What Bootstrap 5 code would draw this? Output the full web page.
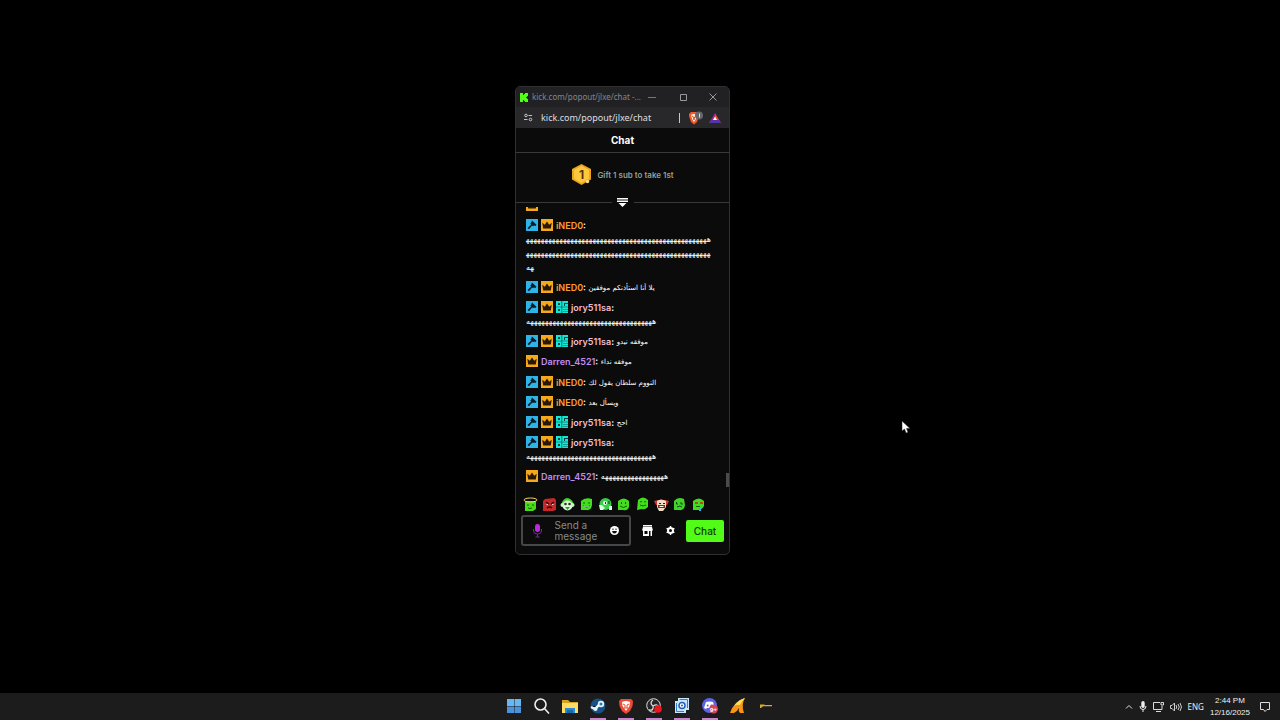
<!DOCTYPE html>
<html lang="en">
<head>
<meta charset="utf-8">
<meta name="viewport" content="width=device-width, initial-scale=1">
<title>Desktop</title>
<link href="https://cdn.jsdelivr.net/npm/bootstrap@5.3.0/dist/css/bootstrap.min.css" rel="stylesheet">
<style>
body{background:#000;font-family:Inter,"DejaVu Sans",sans-serif;font-size:9px;line-height:14px}
button{background:none;border:0;padding:0;color:inherit;line-height:0}
svg{display:block}
.desktop{height:100vh}
.popout{position:absolute;left:515px;top:86px;width:215px;height:469px;background:#0b0b0b;border:1px solid #303033;border-radius:5px;overflow:hidden}
.titlebar{height:20px;background:#212124;color:#85858a;font-family:"Noto Sans",sans-serif;font-size:8px}
.titlebar .tab-name{width:112px}
.addressbar{height:21px;background:#28282b;font-family:"Noto Sans",sans-serif}
.addressbar input{width:130px;background:none;border:0;padding:0;color:#dedee0;font-size:9px;line-height:14px}
.addressbar .divider{width:1px;height:10px;background:#c8c8ca}
.chat-title{height:25px;border-bottom:1px solid #37393b;color:#fff;font-size:10px}
.gift{height:50px;border-bottom:1px solid #37393b;color:#93a09a;font-size:8px}
.gift-offer{padding-bottom:6px;gap:5px}
.gift-toggle{position:absolute;left:50%;bottom:-7px;width:22px;height:14px;margin-left:-11px;background:#0b0b0b;color:#fff}
.messages{padding:4px 15px 6px 10px;height:289px}
.msg{padding:3px 0 2px;color:#fff;overflow-wrap:anywhere}
.msg.clipped{height:4px;padding:0;margin-bottom:4px}
.msg svg{display:inline-block;width:12px;height:12px;margin-right:3px;vertical-align:-2px}
.msg b{font-weight:600}
.msg [lang=ar]{font-family:"DejaVu Sans",sans-serif;font-size:7px;line-height:12px;vertical-align:1px}
.msg .laugh{font-size:8px}
.orange{color:#ff9d33}.pink{color:#f2bdd0}.violet{color:#c18cf5}
.thumb{position:absolute;right:0;top:386px;width:3px;height:14px;background:#4a4b4c}
.emotes{padding:5px 23px 3px 7px}
.composer{padding:0 5px}
.message-box{width:110px;height:31px;border:2px solid #45484a;border-radius:3px;padding:0 10px 0 9px}
.message-box textarea{width:44px;height:22px;background:none;border:0;padding:0;resize:none;overflow:hidden;color:#fff;font-size:10px;line-height:11px}
.message-box textarea::placeholder{color:#858a8c;opacity:1}
.send{width:38px;height:22px;background:#53fc18;border-radius:2px;color:#0d3a05;font-size:10px;line-height:14px;font-weight:500}
.taskbar{height:27px;background:#1c1c1c;color:#eee;font-family:"Noto Sans",sans-serif;font-size:8px;line-height:12px}
.apps{position:absolute;left:506px;bottom:0;height:27px;gap:12px}
.apps button{width:16px;height:27px;border-bottom:2px solid transparent}
.apps button.open{border-color:#c983cf}
.tray{padding-right:10px;gap:6px}
.tray time{font-family:"Liberation Sans",sans-serif}
.pointer{position:absolute;left:901px;top:420px}
</style>
</head>
<body>
<svg width="0" height="0" class="position-absolute" aria-hidden="true">
<symbol id="mod" viewBox="0 0 12 12"><path fill="#2fb4e8" d="M0 0h12v12H0z"/><path fill="#0a1d28" d="m6 1.500 4.500 4.300-1 1.200L8 6.500 7 7.300l-.8-.8L3 10.300 1.500 9l3.700-3.400-1-.9L5 4z"/></symbol>
<symbol id="vip" viewBox="0 0 12 12"><path fill="#f6a91b" d="M0 0h12v12H0z"/><path fill="#2a1803" d="M1.300 3.800 3.800 5.700 6 2.600l2.200 3.100 2.500-1.900-.9 5.700H2.200z"/></symbol>
<symbol id="og" viewBox="0 0 12 12"><path fill="#12e6d6" d="M0 0h12v12H0z"/><path fill="#06453f" d="M2 2h2v2H2zM8 2h4v1H8zM8 3h1v2H8zM2 8h2v2H2zM5.500 0h.7v12h-.7zM0 5.700h12v.6H0z"/><path fill="#0b9f96" d="M7 8h5v1H7zM7 10h5v1H7z"/></symbol>
</svg>
<div class="desktop d-flex flex-column justify-content-end position-relative overflow-hidden">
<main class="popout d-flex flex-column">
 <header class="titlebar d-flex align-items-center ps-1 flex-shrink-0">
  <svg width="8" height="9" viewBox="0 0 8 9"><path fill="#53fc18" d="M0 0h3v2h1V1h1V0h3v3H7v1H6v1h1v1h1v3H5V8H4V7H3v2H0z"/></svg>
  <span class="tab-name ms-1 text-nowrap">kick.com/popout/jlxe/chat -...</span>
  <div class="d-flex flex-fill align-items-center justify-content-between pe-2 me-1 ms-1">
   <button aria-label="Minimize"><svg width="8" height="8" viewBox="0 0 8 8" stroke="#77777b"><path d="M0 4.500h8"/></svg></button>
   <button aria-label="Maximize"><svg width="8" height="8" viewBox="0 0 8 8" stroke="#99999c" fill="none"><path d="M1.500 1.500h6v6h-6z"/></svg></button>
   <button aria-label="Close"><svg width="8" height="8" viewBox="0 0 8 8" stroke="#99999c"><path d="m.5.500 7 7m0-7-7 7"/></svg></button>
  </div>
 </header>
 <div class="addressbar d-flex align-items-center flex-shrink-0 px-2">
  <button class="me-2" aria-label="Site settings"><svg width="9" height="9" viewBox="0 0 9 9" fill="none" stroke="#c5c5c9"><circle cx="2" cy="2.500" r="1.300"/><path d="M4.500 2.500H8M0 6.500h3.500"/><circle cx="6.500" cy="6.500" r="1.300"/></svg></button>
  <input type="text" value="kick.com/popout/jlxe/chat" aria-label="Address">
  <span class="divider ms-2 me-2"></span>
  <button class="me-1" aria-label="Brave Shields"><svg width="17" height="14" viewBox="0 0 17 14"><path fill="#f15a2b" d="m1 3 2-2h5l2 1 1 3-2 6-3 2.500L3 11 1 5z"/><path fill="#ffe9df" d="m3 4 2-1h2l2 1-1 4-2 3-2-3z"/><path stroke="#d8531f" fill="none" d="m4 5 1.500 1L6 9l.5-3L8 5"/><circle cx="11" cy="4.500" r="4" fill="#66676c"/><path stroke="#ddd" d="M11.500 2.500v4"/></svg></button>
  <button aria-label="Rewards"><svg width="12" height="10" viewBox="0 0 12 10"><path fill="#a0268f" d="M6 0 0 10h6z"/><path fill="#e8442c" d="m6 0 6 10H6z"/><path fill="#5434aa" d="M0 10h12l-2-3H2z"/><path fill="#fff" d="m6 3.500 2 3.500H4z"/></svg></button>
 </div>
 <h1 class="chat-title d-flex align-items-center justify-content-center fw-bold m-0 flex-shrink-0">Chat</h1>
 <section class="gift d-flex align-items-center justify-content-center position-relative flex-shrink-0">
  <div class="gift-offer d-flex align-items-center">
   <svg width="21" height="21" viewBox="0 0 21 21"><path fill="#efa51b" d="m10.500 0 9.500 5v10.500L10.500 21 1 15.500V5z"/><path fill="#ffc83f" d="m10.500 2 7.500 4v8.500l-7.500 4.500L3 14.500V6z"/><circle cx="16.500" cy="17.500" r="1.700" fill="#ffe27a"/><text x="10.500" y="15" text-anchor="middle" font-size="12" font-weight="700" fill="#5c3108">1</text></svg>
   <span class="fw-semibold">Gift 1 sub to take 1st</span>
  </div>
  <button class="gift-toggle d-flex justify-content-center align-items-center" aria-label="Expand leaderboard"><svg width="11" height="10" viewBox="0 0 11 10" fill="currentColor"><path d="M0 1h11v1.500H0zM0 3.500h11V5H0zM1.500 6h8l-4 4z"/></svg></button>
 </section>
 <section class="messages d-flex flex-column justify-content-between overflow-hidden flex-shrink-0" aria-label="Messages">
  <div class="msg clipped d-flex align-items-end overflow-hidden flex-shrink-0"><svg class="flex-shrink-0"><use href="#vip"/></svg></div>
  <div class="msg"><svg><use href="#mod"/></svg><svg><use href="#vip"/></svg><b class="orange">iNED0</b><b>:</b> <span class="laugh" lang="ar">هههههههههههههههههههههههههههههههههههههههههههههههههههههههههههههههههههههههههههههههههههههههههههههههههههههه</span></div>
  <div class="msg"><svg><use href="#mod"/></svg><svg><use href="#vip"/></svg><b class="orange">iNED0</b><b>:</b> <span lang="ar">يلا أنا استأذنكم موفقين</span></div>
  <div class="msg"><svg><use href="#mod"/></svg><svg><use href="#vip"/></svg><svg><use href="#og"/></svg><b class="pink">jory511sa</b><b>:</b> <span class="laugh" lang="ar">ههههههههههههههههههههههههههههههههههه</span></div>
  <div class="msg"><svg><use href="#mod"/></svg><svg><use href="#vip"/></svg><svg><use href="#og"/></svg><b class="pink">jory511sa</b><b>:</b> <span lang="ar">موفقه نيدو</span></div>
  <div class="msg"><svg><use href="#vip"/></svg><b class="violet">Darren_4521</b><b>:</b> <span lang="ar">موفقه نداء</span></div>
  <div class="msg"><svg><use href="#mod"/></svg><svg><use href="#vip"/></svg><b class="orange">iNED0</b><b>:</b> <span lang="ar">النووم سلطان يقول لك</span></div>
  <div class="msg"><svg><use href="#mod"/></svg><svg><use href="#vip"/></svg><b class="orange">iNED0</b><b>:</b> <span lang="ar">ويسأل بعد</span></div>
  <div class="msg"><svg><use href="#mod"/></svg><svg><use href="#vip"/></svg><svg><use href="#og"/></svg><b class="pink">jory511sa</b><b>:</b> <span lang="ar">احح</span></div>
  <div class="msg"><svg><use href="#mod"/></svg><svg><use href="#vip"/></svg><svg><use href="#og"/></svg><b class="pink">jory511sa</b><b>:</b> <span class="laugh" lang="ar">ههههههههههههههههههههههههههههههههههه</span></div>
  <div class="msg"><svg><use href="#vip"/></svg><b class="violet">Darren_4521</b><b>:</b> <span class="laugh" lang="ar">هههههههههههههههههه</span></div>
 </section>
 <span class="thumb"></span>
 <div class="emotes d-flex flex-shrink-0 justify-content-between">
  <button aria-label="Angel"><svg width="15" height="15" viewBox="0 0 15 15"><path fill="#44dc18" d="M2 4h11v8l-3 2H2z"/><ellipse cx="7.500" cy="3" rx="6.500" ry="2" fill="none" stroke="#f4d46a"/><path stroke="#126408" fill="none" d="M4 8h2m3 0h2m-6 3q2 1 4 0"/></svg></button>
  <button aria-label="Angry"><svg width="15" height="15" viewBox="0 0 15 15"><path fill="#c42a2c" d="m3 2 9-1 2 2v10l-3 1H1V4z"/><path stroke="#3b0508" stroke-width="1.500" fill="none" d="m4 5 3 2m5-2L9 7m-4 4q2.500-2 5 0"/><path stroke="#ffd7d7" d="M4.500 7.500h1.500m4 0h1.500"/></svg></button>
  <button aria-label="Clown"><svg width="15" height="15" viewBox="0 0 15 15"><path fill="#3fd32c" d="M2 5q5-8 11 0v4H2z"/><circle cx="7.500" cy="8.500" r="5" fill="#e6f5df"/><circle cx="2.500" cy="8" r="2" fill="#c9f5c6"/><circle cx="12.500" cy="8" r="2" fill="#c9f5c6"/><circle cx="5.500" cy="7" r="1.300" fill="#173b1b"/><circle cx="9.500" cy="7" r="1.300" fill="#173b1b"/><path fill="#2aa52f" d="M5 10h5l-2.500 3z"/></svg></button>
  <button aria-label="Laugh"><svg width="15" height="15" viewBox="0 0 15 15"><path fill="#42dd1c" d="M2 4q4-4 11-2v6q-1 6-6 5H2z"/><path stroke="#0b6811" fill="none" d="M4 6h2m3 0h2"/><path fill="#0b6811" d="M4 8h7q-3 5-7 0z"/><path fill="#d1ffc6" d="M5 8.500h5v1H5z"/></svg></button>
  <button aria-label="Wave"><svg width="15" height="15" viewBox="0 0 15 15"><circle cx="7.500" cy="7" r="6" fill="#36cf46"/><path fill="#d4ffe2" d="M1 8h3l3 3-2 2H2zM11 9h3v4h-3z"/><circle cx="7" cy="6" r="2" fill="#fff"/><path stroke="#073b11" d="M7.500 5v2m3.500-3v3"/></svg></button>
  <button aria-label="Happy"><svg width="15" height="15" viewBox="0 0 15 15"><path fill="#42dd1c" d="M2 4q6-5 11 0v6q-1 4-6 3H2z"/><path stroke="#126408" fill="none" d="M5.500 5v2m4-2v2M4 9q3 3 7 0"/></svg></button>
  <button aria-label="Smile"><svg width="15" height="15" viewBox="0 0 15 15"><path fill="#42dd1c" d="M3 3q5-5 10 0v7q-3 3-6 2l-5 1z"/><path stroke="#126408" fill="none" d="M5 5q1-1 2 0m2 0q1-1 2 0M5 8q3 2 6 0"/></svg></button>
  <button aria-label="Shout"><svg width="15" height="15" viewBox="0 0 15 15"><path fill="#d33830" d="m0 4 4-1h7l4 1-2 4H2z"/><path fill="#f2ddc2" d="M3 4q4-3 9 0v6l-3 4H5l-2-4z"/><path fill="#8b241c" d="M4 8h7v3H4z"/><path stroke="#35150f" d="M5 6.500h2m2 0h2"/><path stroke="#fff" d="M5.500 9.500h4"/></svg></button>
  <button aria-label="Think"><svg width="15" height="15" viewBox="0 0 15 15"><path fill="#42d32a" d="M2 4q4-5 10-2l1 6q-1 6-6 5H2z"/><path stroke="#0b4e11" fill="none" d="M4.500 5v2H6m3-2v2h2m-6 3 3-1 2 1"/></svg></button>
  <button aria-label="Cry"><svg width="15" height="15" viewBox="0 0 15 15"><path fill="#42dd1c" d="M2 4q6-5 11 0v5q-2 4-6 4H2z"/><path stroke="#b34e1c" stroke-width="2" d="M4 6h3m2 0h3"/><path stroke="#126408" d="M5 9.500h4"/><path fill="#28b7e7" d="M8 10h2v4H8z"/></svg></button>
 </div>
 <form class="composer d-flex align-items-center flex-shrink-0" onsubmit="return false">
  <div class="message-box d-flex align-items-center justify-content-between">
   <button type="button" aria-label="Voice"><svg width="11" height="15" viewBox="0 0 11 15"><rect x="3" y="1" width="5" height="8" rx="2.500" fill="#b92be0"/><path stroke="#7d209c" fill="none" d="M1.500 6v2q0 3 4 3t4-3V6m-4 5v3m-2 0h4"/></svg></button>
   <textarea placeholder="Send a message" aria-label="Send a message"></textarea>
   <button type="button" aria-label="Emotes"><svg width="9" height="9" viewBox="0 0 9 9"><circle cx="4.500" cy="4.500" r="4.500" fill="#fff"/><path fill="#111" d="M2.500 2.500h1v1.500h-1zm3 0h1v1.500h-1zM2 5h5q-.5 2.500-2.500 2.500T2 5z"/></svg></button>
  </div>
  <div class="d-flex flex-fill justify-content-around align-items-center px-1 text-white">
   <button type="button" aria-label="Shop"><svg width="11" height="11" viewBox="0 0 11 11" fill="#fff" fill-rule="evenodd"><path d="M1 0h9v1.500H1zM1 2h9l1 3.500h-1V11H8.500V6H7v5H1V5.500H0zM2.500 6v3h3V6z"/></svg></button>
   <button type="button" aria-label="Settings"><svg width="9" height="9" viewBox="0 0 9 9"><circle cx="4.500" cy="4.500" r="2.500" fill="none" stroke="#fff" stroke-width="2"/><path stroke="#fff" stroke-width="1.500" d="M4.500 0v1.500m0 6V9M.6 2.300l1.300.7m5.200 3 1.300.7M.6 6.700 1.900 6m5.200-3 1.300-.7"/></svg></button>
  </div>
  <button class="send">Chat</button>
 </form>
</main>
<svg class="pointer" width="10" height="14" viewBox="0 0 10 14"><path fill="#fff" stroke="#222" stroke-width=".5" d="M1 1v10l2.500-2 1.600 4L7 12.200 5.500 8.500H9z"/></svg>
<footer class="taskbar d-flex align-items-center justify-content-end flex-shrink-0">
 <nav class="apps d-flex" aria-label="Apps">
  <button aria-label="Start"><svg width="16" height="16" viewBox="0 0 16 16"><path fill="#69b7f0" d="M1 1h7v7H1zM8.500 1H15v7H8.500z"/><path fill="#4a93dc" d="M1 8.500h7V15H1zM8.500 8.500H15V15H8.500z"/></svg></button>
  <button aria-label="Search"><svg width="16" height="16" viewBox="0 0 16 16" fill="none" stroke="#eee" stroke-width="1.600"><circle cx="6.500" cy="6.500" r="5.500"/><path d="m10.500 10.500 4.500 5"/></svg></button>
  <button aria-label="Files"><svg width="16" height="16" viewBox="0 0 16 16"><path fill="#d9a322" d="M0 2h6l2 2h8v11H0z"/><path fill="#ffdb66" d="M0 5h16v10H0z"/><path fill="#258bd2" d="M3 10h10v5H3z"/><path fill="#176ba8" d="M5 12h6v3H5z"/></svg></button>
  <button class="open" aria-label="Steam"><svg width="16" height="16" viewBox="0 0 16 16"><circle cx="8" cy="8" r="7.500" fill="#155184"/><circle cx="11" cy="6" r="3.200" fill="#e5f2fb"/><circle cx="11" cy="6" r="1.500" fill="#3476a5"/><path stroke="#e5f2fb" stroke-width="2.500" d="m1 9 4 2 4-4"/><circle cx="5.500" cy="11" r="2" fill="#e5f2fb"/></svg></button>
  <button class="open" aria-label="Brave"><svg width="16" height="16" viewBox="0 0 16 16"><path fill="#ee4932" d="m1 3 2-2h10l2 2-.5 5L12 13l-4 3-4-3-2.500-5z"/><path fill="#fff" d="m4 4 3-1h2l3 1-.5 4L8 13 4.500 8z"/><path stroke="#ee4932" fill="none" d="m5 6 2 1v3m4-4L9 7v3M6 10h4"/></svg></button>
  <button class="open" aria-label="OBS"><svg width="16" height="16" viewBox="0 0 16 16"><circle cx="7.500" cy="7.500" r="6.800" fill="#272629" stroke="#ddd"/><path fill="none" stroke="#ddd" stroke-width="1.300" d="M7 2q-4 3 0 6m0 0q5-3 6 2M7 8q1 5-4 4"/><circle cx="12" cy="11" r="3.800" fill="#ed1520"/></svg></button>
  <button class="open" aria-label="Capture"><svg width="16" height="16" viewBox="0 0 16 16"><path fill="#c9e6fb" d="M4 0h11v12h-3v3H1V3h3z"/><path fill="none" stroke="#347bd2" d="M5.500 1.500h8V10M2.500 5v8.500H10"/><circle cx="8" cy="7.500" r="3" fill="#fff" stroke="#235fb6" stroke-width="1.500"/><circle cx="8" cy="7.500" r="1" fill="#235fb6"/></svg></button>
  <button class="open" aria-label="Discord"><svg width="16" height="16" viewBox="0 0 16 16"><circle cx="7.500" cy="7.500" r="7.500" fill="#5b64e6"/><path fill="#fff" d="M4 4q4-1 7 0l2 6-2 1-1-1H5l-1 1-2-1z"/><circle cx="5.700" cy="7.500" r="1" fill="#5b64e6"/><circle cx="9.500" cy="7.500" r="1" fill="#5b64e6"/><circle cx="11.500" cy="11" r="4.500" fill="#d34858"/><text x="11.500" y="13.500" text-anchor="middle" font-size="6" font-weight="700" fill="#fff">9+</text></svg></button>
  <button aria-label="Shark"><svg width="16" height="16" viewBox="0 0 16 16"><path fill="#f7941a" d="M0 15Q4 3 15 0q-4 7-1 15h-4q-2-2-1-5-2 4-5 5z"/><path fill="#ffdf55" d="M4 8Q8 2 15 0q-3 3-5 7-3-1-6 1z"/></svg></button>
  <button aria-label="Weapon"><svg width="16" height="16" viewBox="0 0 16 16"><path fill="#e0a72d" d="M2 6.500h4l1 .5h7v1.200H5L3 10H2z"/></svg></button>
 </nav>
 <div class="tray d-flex align-items-center">
  <button aria-label="Hidden icons"><svg width="8" height="8" viewBox="0 0 8 8" fill="none" stroke="#ddd"><path d="m1 5.500 3-3 3 3"/></svg></button>
  <button aria-label="Microphone"><svg width="8" height="11" viewBox="0 0 8 11"><rect x="2.300" width="3.400" height="7" rx="1.700" fill="#eee"/><path stroke="#eee" fill="none" d="M1 5q0 3.500 3 3.500T7 5M4 8.500V11"/></svg></button>
  <button aria-label="Network"><svg width="11" height="11" viewBox="0 0 11 11" fill="none" stroke="#ddd"><path d="M7 1.500H.5v7H9V5M3 10.500h5M8 1.500h2.500V4H8z"/></svg></button>
  <button aria-label="Volume"><svg width="12" height="10" viewBox="0 0 12 10" fill="none" stroke="#ccc"><path d="M.5 3.500H2L4.500 1v8L2 6.500H.5zM6 3q1.500 2 0 4M8 2q2.500 3 0 6M10 1q3 4 0 8"/></svg></button>
  <span>ENG</span>
  <time class="text-center text-nowrap">2:44 PM<br>12/16/2025</time>
  <button class="ms-1" aria-label="Notifications"><svg width="10" height="10" viewBox="0 0 10 10" fill="none" stroke="#ddd"><path d="M.5.500h9v7H7L5 9.500 3.500 7.500h-3z"/></svg></button>
 </div>
</footer>
</div>
<script src="https://cdn.jsdelivr.net/npm/bootstrap@5.3.0/dist/js/bootstrap.bundle.min.js"></script>
</body>
</html>
